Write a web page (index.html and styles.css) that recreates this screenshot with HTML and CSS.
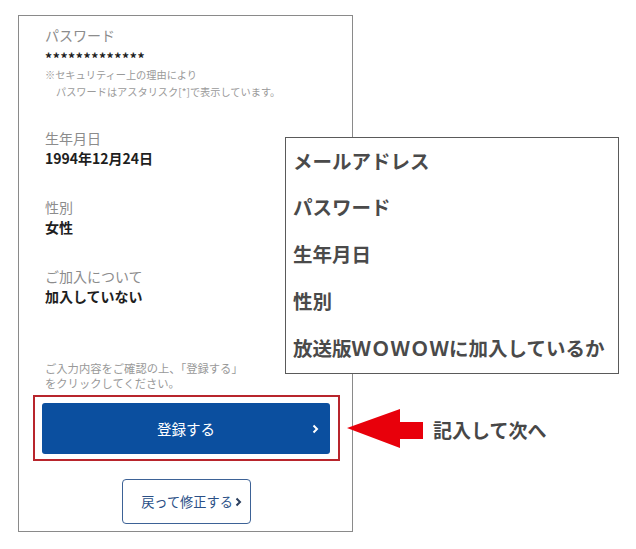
FILE: index.html
```html
<!DOCTYPE html>
<html lang="ja">
<head>
<meta charset="utf-8">
<title>登録内容の確認</title>
<link rel="stylesheet" href="styles.css">
</head>
<body>
<main class="stage">
  <section class="phone">
    <div class="field field-first">
      <div class="label">パスワード</div>
      <div class="value stars">*************</div>
      <p class="note">※セキュリティー上の理由により<br><span class="indent">パスワードはアスタリスク[*]で表示しています。</span></p>
    </div>
    <div class="field">
      <div class="label">生年月日</div>
      <div class="value">1994年12月24日</div>
    </div>
    <div class="field">
      <div class="label">性別</div>
      <div class="value">女性</div>
    </div>
    <div class="field">
      <div class="label">ご加入について</div>
      <div class="value">加入していない</div>
    </div>
    <p class="confirm-note">ご入力内容をご確認の上、「登録する」<br>をクリックしてください。</p>
    <div class="highlight">
      <button class="primary" type="button">
        <span>登録する</span>
        <svg class="chev" width="7" height="10" viewBox="0 0 7 10"><path d="M1.5 1.5 L5 5 L1.5 8.5" fill="none" stroke="#fff" stroke-width="2"/></svg>
      </button>
    </div>
    <button class="back" type="button">戻って修正する<svg class="chev-dark" width="7" height="10" viewBox="0 0 7 10"><path d="M1.5 1.5 L5 5 L1.5 8.5" fill="none" stroke="#2b3f5e" stroke-width="2"/></svg></button>
  </section>

  <aside class="legend">
    <div class="legend-item legend-first">メールアドレス</div>
    <div class="legend-item">パスワード</div>
    <div class="legend-item">生年月日</div>
    <div class="legend-item">性別</div>
    <div class="legend-item">放送版ＷＯＷＯＷに加入しているか</div>
  </aside>

  <div class="callout">
    <svg class="arrow" width="77" height="40" viewBox="0 0 77 40"><polygon points="0,19 53,0 53,13 76,13 76,30 53,30 53,39" fill="#e8000b"/></svg>
    <span class="callout-text">記入して次へ</span>
  </div>
</main>
</body>
</html>
```

FILE: styles.css
```css
* { box-sizing: border-box; }
html, body {
  margin: 0;
  padding: 0;
  background: #fff;
}
body {
  font-family: "Noto Sans CJK JP", "Noto Sans", sans-serif;
  color: #222;
}
.stage {
  position: relative;
  width: 636px;
  height: 549px;
  padding: 15px 0 0 18px;
}
.phone {
  width: 335px;
  height: 517px;
  border: 1px solid #8a8a8a;
  padding: 9px 12px 7px 14px;
  display: flex;
  flex-direction: column;
}
.field {
  padding-left: 12px;
  margin-top: 29px;
}
.field-first { margin-top: 0; }
.field-first + .field { margin-top: 28px; }
.label {
  font-size: 14px;
  line-height: 20px;
  color: #8c8c8c;
  font-weight: 400;
}
.value {
  font-size: 14px;
  line-height: 20px;
  font-weight: 700;
  color: #1e1e1e;
}
.stars {
  letter-spacing: 0.6px;
  line-height: 22px;
  padding-top: 2px;
  height: 20px;
}
.note {
  margin: 1px 0 0;
  font-size: 10.2px;
  line-height: 17px;
  color: #9a9a9a;
}
.indent { padding-left: 11px; }
.confirm-note {
  margin: 55px 0 0;
  padding-left: 12px;
  font-size: 11.3px;
  line-height: 15px;
  color: #999;
}
.highlight {
  margin-top: 4px;
  border: 2px solid #b8252c;
  padding: 6px 8px 5px 7px;
}
.primary {
  width: 100%;
  height: 51px;
  border: 0;
  border-radius: 3px;
  background: #0b4f9f;
  color: #fff;
  font-family: inherit;
  font-size: 14.5px;
  position: relative;
  display: flex;
  align-items: center;
  justify-content: center;
  padding: 0;
}
.primary .chev {
  position: absolute;
  right: 11px;
  top: 21px;
}
.back {
  align-self: center;
  margin-top: 18px;
  width: 129px;
  height: 45px;
  border: 1px solid #3d6296;
  border-radius: 4px;
  background: #fff;
  color: #2a4f86;
  font-family: inherit;
  font-size: 13.2px;
  display: flex;
  align-items: center;
  justify-content: center;
  gap: 2px;
  padding: 0 0 0 10px;
}
.legend {
  position: absolute;
  left: 285px;
  top: 137px;
  width: 334px;
  height: 237px;
  border: 1px solid #5a5a5a;
  background: #fff;
  padding: 0 0 0 7px;
}
.legend-item {
  font-size: 19.5px;
  line-height: 47px;
  font-weight: 700;
  color: #4a4a4a;
  white-space: nowrap;
}
.legend-first { line-height: 45px; }
.callout {
  position: absolute;
  left: 347px;
  top: 409px;
  display: flex;
  align-items: center;
  gap: 9px;
}
.arrow { display: block; }
.callout-text {
  font-size: 19px;
  font-weight: 700;
  color: #474747;
  line-height: 24px;
  margin-top: 1px;
}
```
